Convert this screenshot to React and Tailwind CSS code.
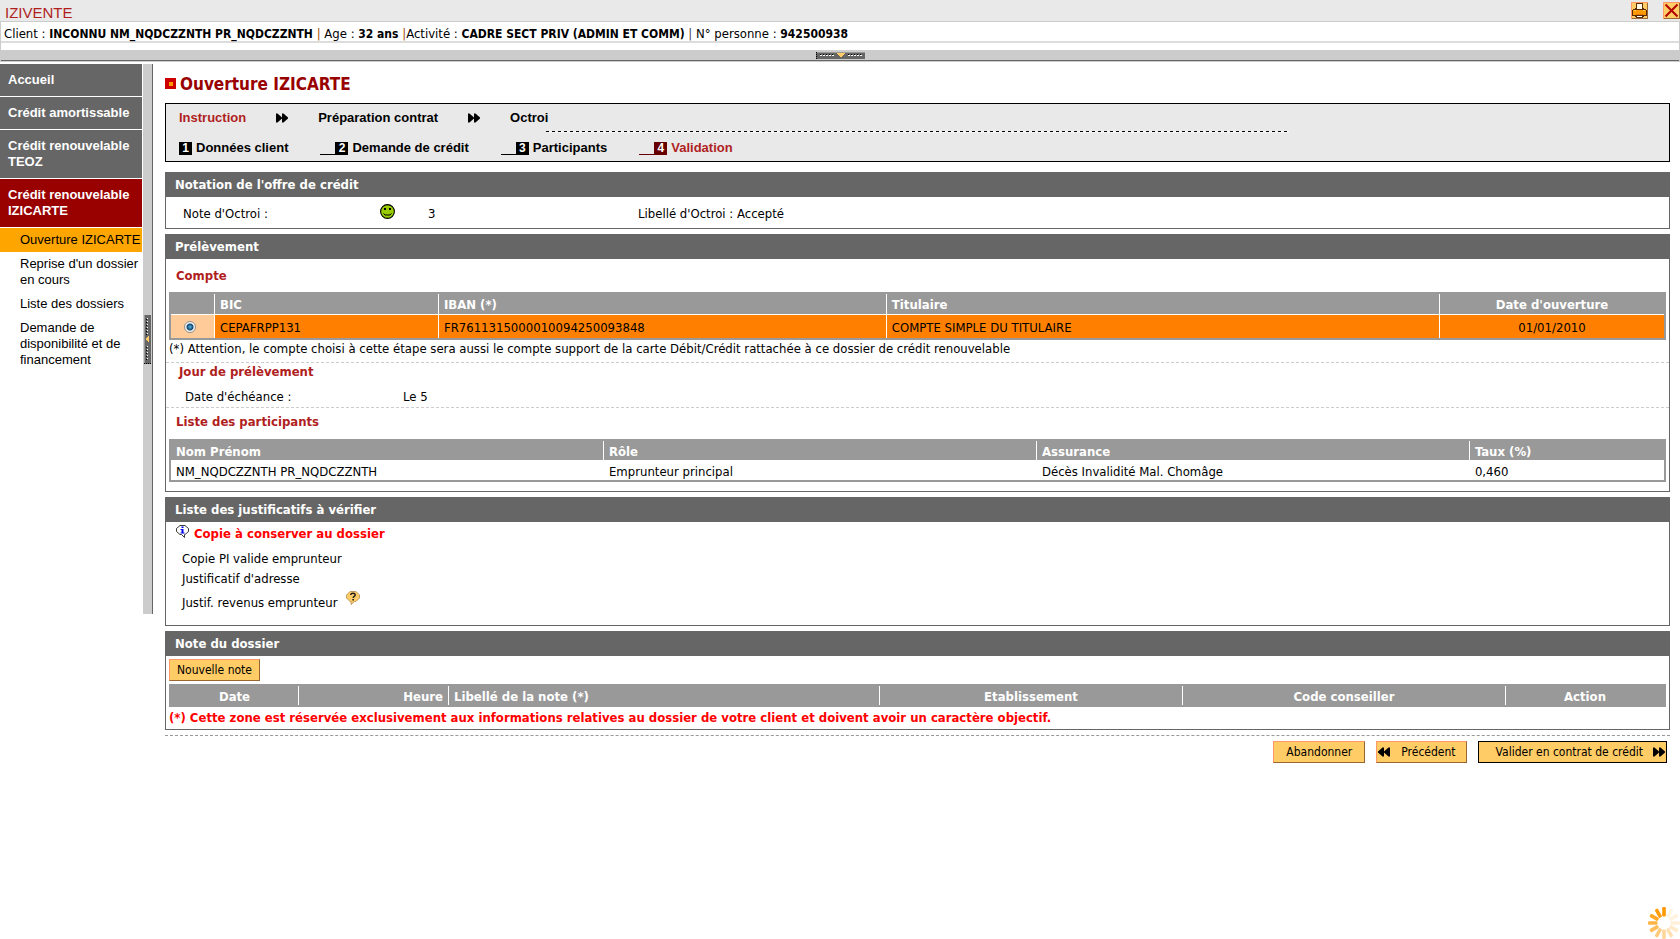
import React from "react";

const steps = [
  { n: 1, label: "Données client" },
  { n: 2, label: "Demande de crédit" },
  { n: 3, label: "Participants" },
  { n: 4, label: "Validation", current: true },
];

const menu = [
  { label: "Accueil" },
  { label: "Crédit amortissable" },
  { label: "Crédit renouvelable TEOZ" },
  { label: "Crédit renouvelable IZICARTE", current: true },
];

const submenu = [
  { label: "Ouverture IZICARTE", current: true },
  { label: "Reprise d'un dossier en cours" },
  { label: "Liste des dossiers" },
  { label: "Demande de disponibilité et de financement" },
];

function DoubleArrow({ left = false, className = "" }) {
  return (
    <svg
      width="12"
      height="10"
      viewBox="0 0 12 10"
      aria-hidden="true"
      className={`shrink-0 ${left ? "rotate-180" : ""} ${className}`}
    >
      <path d="M0 0.500h1.500L6 4.500V.5h1.500L12 4.500v1L7.500 9.500H6v-4l-4.500 4H0z" fill="#000" />
    </svg>
  );
}

function PrinterIcon() {
  return (
    <svg width="17" height="17" viewBox="0 0 17 17" shapeRendering="crispEdges" aria-hidden="true">
      <rect width="17" height="17" fill="#ffcc66" />
      <path d="M0 0h17v1H1v16H0z" fill="#ff9966" />
      <path d="M16 1h1v16H1v-1h15z" fill="#996633" />
      <path d="M5 1h7v5h1v1h2v1h1v6h-3v1h-1v1H5v-1H4v-1H1V8h1V7h2V6h1z" fill="#5a2a00" />
      <rect x="6" y="2" width="5" height="5" fill="#fffbe8" />
      <rect x="2" y="8" width="13" height="5" fill="#ff9900" />
      <rect x="3" y="8" width="2" height="1" fill="#ffcc66" />
      <rect x="12" y="8" width="2" height="1" fill="#ffcc66" />
      <rect x="5" y="12" width="7" height="1" fill="#e66f00" />
      <rect x="6" y="14" width="5" height="1" fill="#fff" />
    </svg>
  );
}

function CloseIcon() {
  return (
    <svg width="17" height="17" viewBox="0 0 17 17" aria-hidden="true">
      <rect width="17" height="17" fill="#ffcc66" />
      <path d="M0 0h17v1H1v16H0z" fill="#ff9966" />
      <path d="M16 1h1v16H1v-1h15z" fill="#996633" />
      <path d="M2.500 2.500l12 12M14.500 2.500l-12 12" stroke="#b30000" strokeWidth="2" fill="none" />
    </svg>
  );
}

function Grip({ vertical = false }) {
  return vertical ? (
    <svg width="7" height="49" viewBox="0 0 7 49" shapeRendering="crispEdges" aria-hidden="true">
      <rect width="7" height="49" fill="#666" />
      <rect width="1" height="49" fill="#999" />
      <path d="M3.500 3v16M3.500 31v15" stroke="#fff" strokeDasharray="1 2" />
      <path d="M2.500 4v16M2.500 32v15" stroke="#000" strokeDasharray="1 2" />
      <path d="M0 48.500h7" stroke="#000" strokeDasharray="1 1" />
      <path d="M5 20v8L1 24z" fill="#ffcc66" />
    </svg>
  ) : (
    <svg width="49" height="7" viewBox="0 0 49 7" shapeRendering="crispEdges" aria-hidden="true">
      <rect width="49" height="7" fill="#666" />
      <rect width="49" height="1" fill="#999" />
      <path d="M4 3.500h15M32 3.500h15" stroke="#fff" strokeDasharray="2 1" />
      <path d="M4 2.500h15M32 2.500h15" stroke="#000" strokeDasharray="1 2" />
      <path d="M.5 0v7" stroke="#000" strokeDasharray="1 1" />
      <path d="M21 1h8l-4 5z" fill="#ffcc66" />
    </svg>
  );
}

function Smiley() {
  return (
    <svg width="15" height="15" viewBox="0 0 15 15" role="img" aria-label="Favorable">
      <circle cx="7.500" cy="7.500" r="6.900" fill="#99cc00" stroke="#000" strokeWidth="1.100" />
      <rect x="4" y="4" width="2" height="2" fill="#000" />
      <rect x="9" y="4" width="2" height="2" fill="#000" />
      <path d="M3.500 9.500l1.500 1.500h5l1.500-1.500" fill="none" stroke="#000" />
    </svg>
  );
}

function InfoBubble() {
  return (
    <svg width="13" height="13" viewBox="0 0 13 13" aria-hidden="true">
      <path
        d="M4 .5h5l3.500 3v3L9 9.500H8.500v3l-3-3H4l-3.500-3v-3z"
        fill="#fff"
        stroke="#222"
        strokeWidth=".9"
      />
      <path d="M5.500 1.500h2V3h-2zM4.500 4h3v3.500h1v1h-4v-1h1V5h-1z" fill="#0000ee" />
    </svg>
  );
}

function HelpBubble() {
  return (
    <svg width="14" height="14" viewBox="0 0 14 14" aria-hidden="true">
      <path
        d="M4 .5h6l3.500 3.500v3L10 10.500H8.500L5 13.500v-3H4L.5 7V4z"
        fill="#ffcc66"
        stroke="#b08a50"
        strokeWidth=".8"
      />
      <path d="M4.800 4c0-2.400 4.400-2.400 4.400 0 0 1.500-2 1.300-2 3" fill="none" stroke="#222" strokeWidth="1.500" />
      <rect x="6.300" y="8" width="1.700" height="1.500" fill="#222" />
    </svg>
  );
}

function Spinner() {
  const shades = [1, 0.1, 0.12, 0.15, 0.2, 0.3, 0.4, 0.5, 0.65, 0.75, 0.85, 0.95];
  return (
    <svg width="32" height="32" viewBox="0 0 32 32" role="img" aria-label="Chargement">
      {shades.map((o, i) => (
        <rect
          key={i}
          x="14.200"
          y="0"
          width="3.600"
          height="9.500"
          rx="1.200"
          fill="#ff9900"
          opacity={o}
          transform={`rotate(${i * 30} 16 16)`}
        />
      ))}
    </svg>
  );
}

function Section({ title, children }) {
  return (
    <section className="mb-[5px] border border-[#666]">
      <h2 className="bg-[#666] pl-[9px] leading-6 font-bold text-white">{title}</h2>
      {children}
    </section>
  );
}

function OrangeButton({ children, className = "" }) {
  return (
    <button
      type="button"
      className={`flex h-[22px] items-center border bg-[#ffcc66] text-xs leading-5 whitespace-nowrap ${className}`}
    >
      {children}
    </button>
  );
}

const bevel = "border-t-[#ff9966] border-l-[#ff9966] border-r-[#996633] border-b-[#996633]";
const th = "border-r border-white px-[5px] pt-0.5 font-bold text-white last:border-r-0";
const td = "px-[5px] pt-0.5";
const tableBase = "w-full table-fixed border-separate border-spacing-0 border-2 border-[#999] text-left";

export default function App() {
  return (
    <div className="min-h-screen bg-white font-['DejaVu_Sans_Condensed','DejaVu_Sans',sans-serif] text-[13px] leading-4 text-black">
      <header>
        <div className="flex h-[21px] items-center justify-between bg-[#e9e9e9] pl-[5px] font-['Liberation_Sans',Arial,sans-serif]">
          <span className="pt-1 text-[15px] leading-4 text-[#b01e1e]">IZIVENTE</span>
          <div className="flex gap-[15px]">
            <button type="button" aria-label="Imprimer"><PrinterIcon /></button>
            <button type="button" aria-label="Fermer"><CloseIcon /></button>
          </div>
        </div>
        <div className="border border-[#ccc]">
          <p className="h-[21px] border-b-2 border-[#ddd] pt-1 pl-[3px] leading-[15px] whitespace-pre [&_b]:text-xs [&_b]:leading-[15px]">
            Client : <b>INCONNU NM_NQDCZZNTH PR_NQDCZZNTH</b> <span className="text-[#a05000]">|</span> Age : <b>32 ans</b>{" "}
            <span className="text-[#a05000]">|</span>Activité : <b>CADRE SECT PRIV (ADMIN ET COMM)</b>{" "}
            <span className="text-[#444]">|</span> N° personne : <b>942500938</b>
          </p>
          <div className="mt-[7px] flex h-[11px] items-center justify-center border-b border-[#666] bg-[#ccc]">
            <button type="button" aria-label="Replier l'en-tête"><Grip /></button>
          </div>
        </div>
      </header>

      <div className="flex items-start pt-0.5">
        <div className="flex h-[550px] w-[153px] shrink-0 font-['Liberation_Sans',Arial,sans-serif]">
          <nav className="mr-px w-[142px]">
            <ul>
              {menu.map((m) => (
                <li key={m.label} className="mb-px">
                  <a
                    href="#"
                    className={`block py-2 pl-2 font-bold text-white ${m.current ? "bg-[#990000]" : "bg-[#666]"}`}
                  >
                    {m.label}
                  </a>
                </li>
              ))}
            </ul>
            <ul>
              {submenu.map((m) => (
                <li key={m.label}>
                  <a href="#" className={`block py-1 pl-5 ${m.current ? "bg-[#ffa500]" : ""}`}>
                    {m.label}
                  </a>
                </li>
              ))}
            </ul>
          </nav>
          <div className="flex w-[10px] items-center justify-center border-r border-[#666] bg-[#ccc]">
            <button type="button" aria-label="Replier le menu"><Grip vertical /></button>
          </div>
        </div>

        <main className="min-w-0 flex-1 pr-[10px] pl-3">
          <div className="flex h-[39px] items-center gap-1">
            <svg width="11" height="11" viewBox="0 0 11 11" shapeRendering="crispEdges" aria-hidden="true">
              <rect width="11" height="11" fill="#cc0000" />
              <rect x="4" y="4" width="4" height="4" fill="#ff9900" />
            </svg>
            <h1 className="text-[17px] leading-5 font-bold text-[#990000]">Ouverture IZICARTE</h1>
          </div>

          <div className="mb-[10px] border border-black bg-[#e9e9e9] font-['Liberation_Sans',Arial,sans-serif] font-bold">
            <div className="flex h-[27px] items-center pl-[13px]">
              <span className="text-[#b01e1e]">Instruction</span>
              <DoubleArrow className="mx-[30px]" />
              <span>Préparation contrat</span>
              <DoubleArrow className="mx-[30px]" />
              <span>Octroi</span>
            </div>
            <div className="mx-[380px] h-0.5 border-b border-[#f4f4f4] bg-[repeating-linear-gradient(90deg,#000_0_3px,#f4f4f4_3px_6px)]" />
            <ol className="flex h-7 items-center gap-8 pt-0.5 pl-[13px]">
              {steps.map((s) => (
                <li key={s.n} className={`flex items-center ${s.current ? "text-[#b01e1e]" : ""}`}>
                  {s.n > 1 && (
                    <span className={`h-[13px] w-[15px] border-b ${s.current ? "border-[#660000]" : "border-black"}`} />
                  )}
                  <span
                    className={`mr-1 h-[13px] w-[13px] text-center text-xs leading-[13px] text-white ${s.current ? "bg-[#660000]" : "bg-black"}`}
                  >
                    {s.n}
                  </span>
                  {s.label}
                </li>
              ))}
            </ol>
          </div>

          <Section title="Notation de l'offre de crédit">
            <div className="flex h-[31px] items-center pt-0.5 pl-[17px]">
              <span className="w-[197px]">Note d'Octroi :</span>
              <span className="w-12 pb-1"><Smiley /></span>
              <span className="w-[210px]">3</span>
              <span>Libellé d'Octroi : Accepté</span>
            </div>
          </Section>

          <Section title="Prélèvement">
            <h3 className="pl-[10px] leading-[33px] font-bold text-[#b01e1e]">Compte</h3>
            <div className="px-[3px]">
              <table className={tableBase}>
                <colgroup>
                  <col className="w-[44px]" />
                  <col className="w-[15%]" />
                  <col className="w-[30%]" />
                  <col />
                  <col className="w-[224px]" />
                </colgroup>
                <thead className="bg-[#999]">
                  <tr className="h-[21px]">
                    <th className={`${th} border-b`} aria-label="Choix" />
                    <th className={`${th} border-b`}>BIC</th>
                    <th className={`${th} border-b`}>IBAN (*)</th>
                    <th className={`${th} border-b`}>Titulaire</th>
                    <th className={`${th} border-b text-center`}>Date d'ouverture</th>
                  </tr>
                </thead>
                <tbody>
                  <tr className="h-[23px] bg-[#ff8000]">
                    <td className="border-r border-white bg-[#ffcc99] pr-[6px]">
                      <input
                        type="radio"
                        name="compte"
                        defaultChecked
                        aria-label="Compte CEPAFRPP131"
                        className="mx-auto block h-3 w-3 appearance-none rounded-full border border-[#8e8f8f] bg-[radial-gradient(circle,#4fb8e8_0px,#16446c_3px,#f4f4f4_4px)]"
                      />
                    </td>
                    <td className={`${td} border-r border-white`}>CEPAFRPP131</td>
                    <td className={`${td} border-r border-white`}>FR7611315000010094250093848</td>
                    <td className={`${td} border-r border-white`}>COMPTE SIMPLE DU TITULAIRE</td>
                    <td className={`${td} text-center`}>01/01/2010</td>
                  </tr>
                </tbody>
              </table>
              <p className="pb-1 leading-[18px]">
                (*) Attention, le compte choisi à cette étape sera aussi le compte support de la carte Débit/Crédit rattachée à ce dossier de crédit renouvelable
              </p>
            </div>
            <div className="border-y border-dashed border-[#ccc]">
              <h3 className="pl-[13px] leading-[18px] font-bold text-[#b01e1e]">Jour de prélèvement</h3>
              <div className="flex h-[26px] items-center pt-1.5 pl-[19px]">
                <span className="w-[218px]">Date d'échéance :</span>
                <span>Le 5</span>
              </div>
            </div>
            <h3 className="pb-1 pl-[10px] leading-[27px] font-bold text-[#b01e1e]">Liste des participants</h3>
            <div className="px-[3px] pb-[9px]">
              <table className={tableBase}>
                <colgroup>
                  <col className="w-[29%]" />
                  <col className="w-[29%]" />
                  <col className="w-[29%]" />
                  <col className="w-[13%]" />
                </colgroup>
                <thead className="bg-[#999]">
                  <tr className="h-[19px]">
                    <th className={th}>Nom Prénom</th>
                    <th className={th}>Rôle</th>
                    <th className={th}>Assurance</th>
                    <th className={th}>Taux (%)</th>
                  </tr>
                </thead>
                <tbody>
                  <tr className="h-5">
                    <td className="px-[5px] pt-1">NM_NQDCZZNTH PR_NQDCZZNTH</td>
                    <td className="px-[5px] pt-1">Emprunteur principal</td>
                    <td className="px-[5px] pt-1">Décès Invalidité Mal. Chomâge</td>
                    <td className="px-[5px] pt-1">0,460</td>
                  </tr>
                </tbody>
              </table>
            </div>
          </Section>

          <Section title="Liste des justificatifs à vérifier">
            <h3 className="flex h-[23px] items-center gap-[5px] pl-[10px] font-bold text-[#ff0000]">
              <span className="pb-1"><InfoBubble /></span>
              Copie à conserver au dossier
            </h3>
            <ul className="pt-1 pb-2 pl-4 leading-5">
              <li>Copie PI valide emprunteur</li>
              <li>Justificatif d'adresse</li>
              <li className="flex items-start gap-2 leading-7">
                Justif. revenus emprunteur
                <button type="button" aria-label="Aide" className="pt-0.5"><HelpBubble /></button>
              </li>
            </ul>
          </Section>

          <Section title="Note du dossier">
            <div className="px-[3px] pt-[3px]">
              <OrangeButton className={`mb-[3px] px-[7px] ${bevel}`}>Nouvelle note</OrangeButton>
              <table className={tableBase}>
                <colgroup>
                  <col className="w-[128px]" />
                  <col className="w-[150px]" />
                  <col />
                  <col className="w-[303px]" />
                  <col className="w-[323px]" />
                  <col className="w-[158px]" />
                </colgroup>
                <thead className="bg-[#999]">
                  <tr className="h-[19px]">
                    <th className={`${th} text-center`}>Date</th>
                    <th className={`${th} text-right`}>Heure</th>
                    <th className={th}>Libellé de la note (*)</th>
                    <th className={`${th} text-center`}>Etablissement</th>
                    <th className={`${th} text-center`}>Code conseiller</th>
                    <th className={`${th} text-center`}>Action</th>
                  </tr>
                </thead>
              </table>
              <p className="leading-[22px] font-bold text-[#ff0000]">
                (*) Cette zone est réservée exclusivement aux informations relatives au dossier de votre client et doivent avoir un caractère objectif.
              </p>
            </div>
          </Section>

          <div className="flex justify-end gap-[11px] border-t border-dashed border-[#999] pt-[5px] pr-[3px]">
            <OrangeButton className={`px-3 ${bevel}`}>Abandonner</OrangeButton>
            <OrangeButton className={`gap-[11px] pr-[10px] pl-px ${bevel}`}>
              <DoubleArrow left />
              Précédent
            </OrangeButton>
            <OrangeButton className="gap-[10px] border-black pr-px pl-[17px]">
              Valider en contrat de crédit
              <DoubleArrow />
            </OrangeButton>
          </div>
        </main>
      </div>

      <div className="fixed right-0 bottom-0">
        <Spinner />
      </div>
    </div>
  );
}
